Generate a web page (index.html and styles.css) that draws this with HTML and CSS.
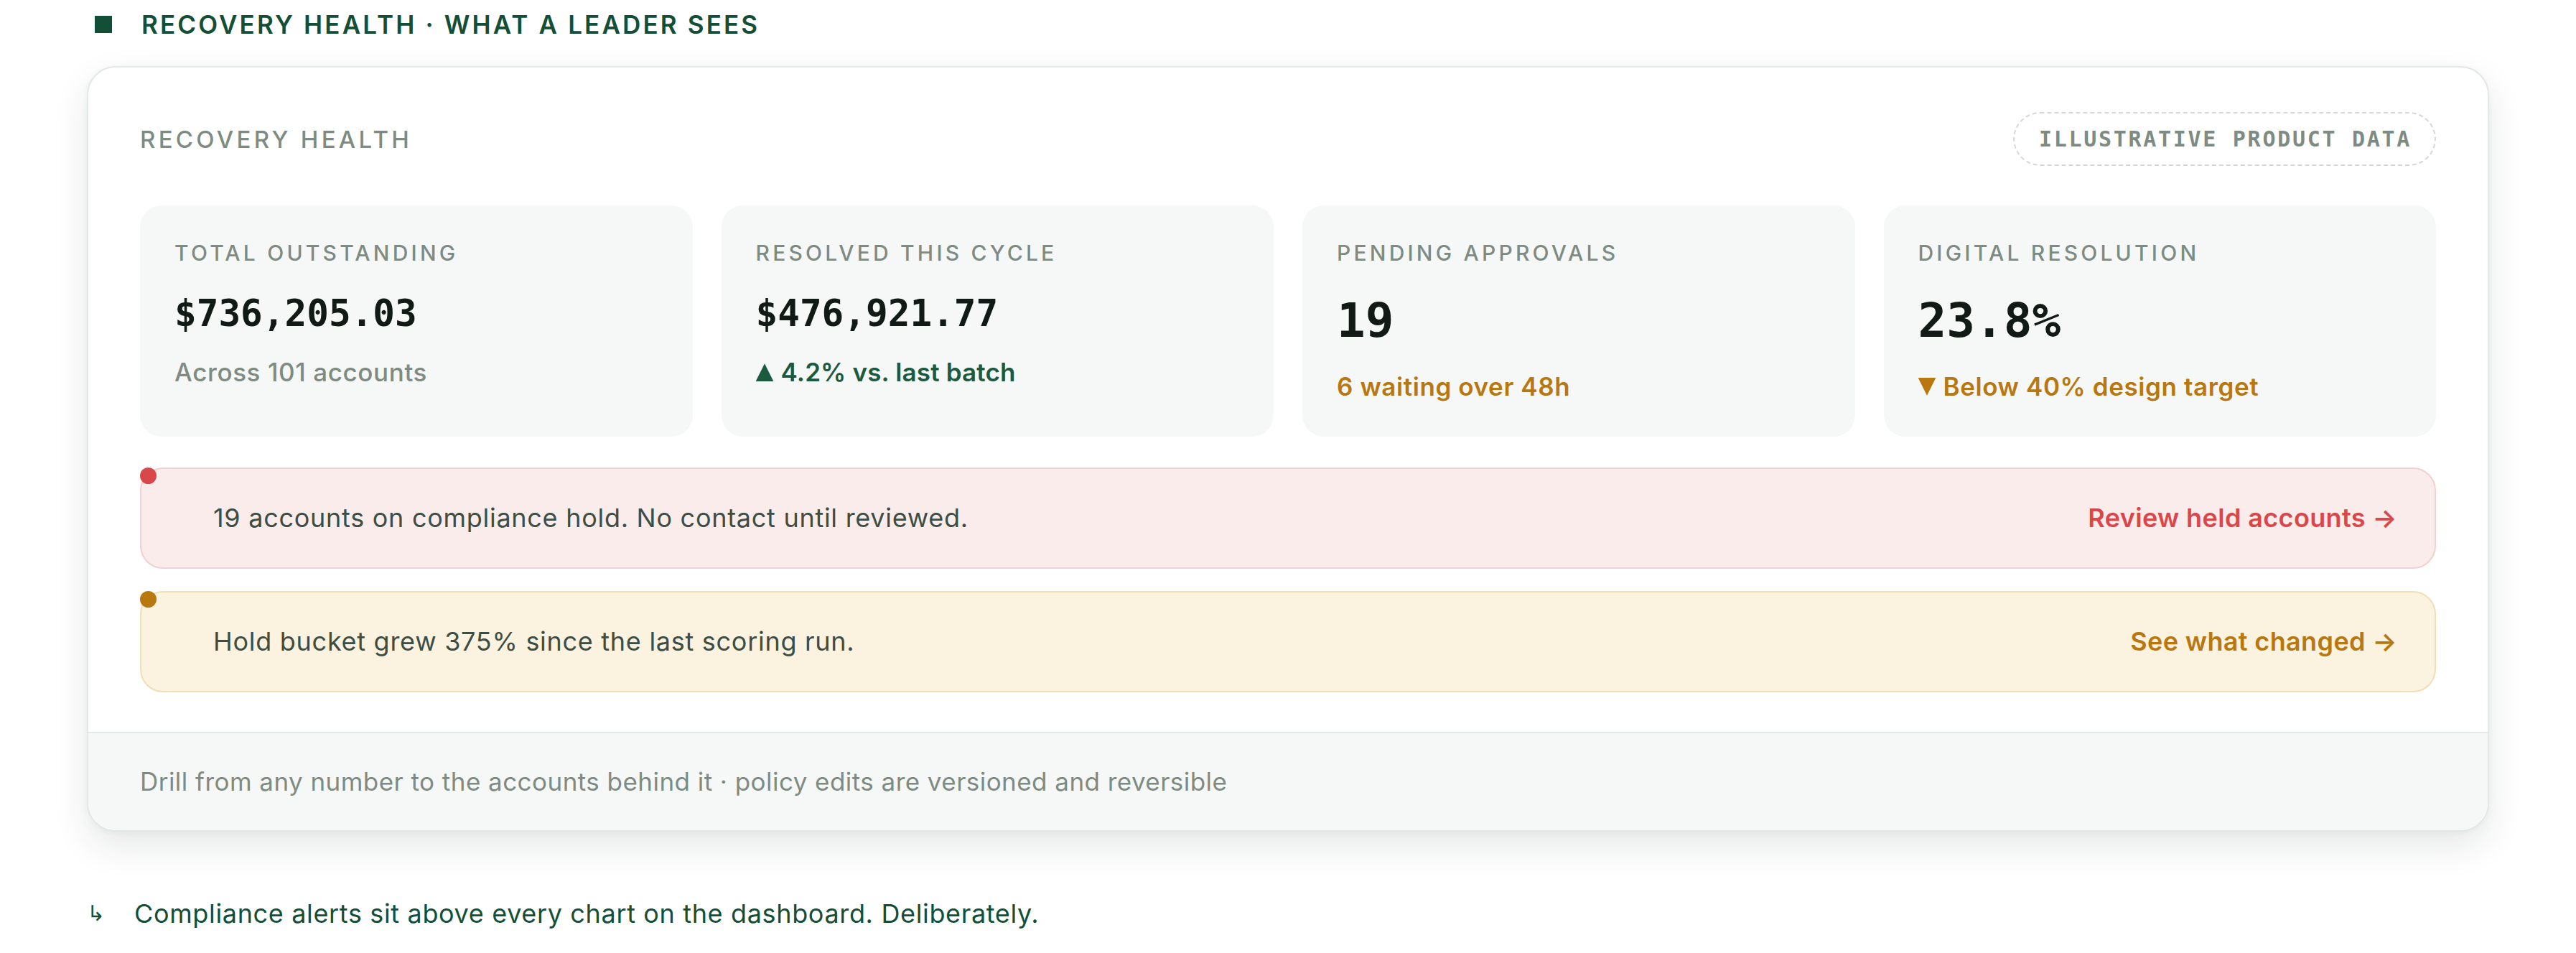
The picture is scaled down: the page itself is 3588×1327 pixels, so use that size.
FILE: index.html
```html
<!DOCTYPE html>
<html lang="en">

<head>
    <meta charset="UTF-8">
    <meta name="viewport" content="width=device-width, initial-scale=1.0">
    <title>Recovery Health</title>
    <link rel="stylesheet" href="styles.css">
</head>

<body>
    <main class="page">
        <h2 class="eyebrow"><span class="eyebrow-mark"></span>Recovery health · What a leader sees</h2>

        <section class="panel">
            <div class="panel-body">
                <div class="panel-head">
                    <span class="panel-title">Recovery health</span>
                    <span class="tag">Illustrative product data</span>
                </div>

                <!-- Headline numbers -->
                <div class="stats">
                    <div class="stat">
                        <div class="stat-label">Total outstanding</div>
                        <div class="stat-value">$736,205.03</div>
                        <div class="stat-sub">Across 101 accounts</div>
                    </div>
                    <div class="stat">
                        <div class="stat-label">Resolved this cycle</div>
                        <div class="stat-value">$476,921.77</div>
                        <div class="stat-sub good"><span class="tri up"></span>4.2% vs. last batch</div>
                    </div>
                    <div class="stat">
                        <div class="stat-label">Pending approvals</div>
                        <div class="stat-value big">19</div>
                        <div class="stat-sub warn">6 waiting over 48h</div>
                    </div>
                    <div class="stat">
                        <div class="stat-label">Digital resolution</div>
                        <div class="stat-value big">23.8%</div>
                        <div class="stat-sub warn"><span class="tri down"></span>Below 40% design target</div>
                    </div>
                </div>

                <!-- Alerts -->
                <div class="alerts">
                    <div class="alert alert-danger">
                        <span class="alert-dot"></span>
                        <p>19 accounts on compliance hold. No contact until reviewed.</p>
                        <a href="#">Review held accounts →</a>
                    </div>
                    <div class="alert alert-warn">
                        <span class="alert-dot"></span>
                        <p>Hold bucket grew 375% since the last scoring run.</p>
                        <a href="#">See what changed →</a>
                    </div>
                </div>
            </div>

            <div class="panel-foot">
                Drill from any number to the accounts behind it · policy edits are versioned and reversible
            </div>
        </section>

        <p class="note"><span class="note-arrow">↳</span>Compliance alerts sit above every chart on the dashboard. Deliberately.</p>
    </main>
</body>

</html>
```

FILE: styles.css
```css
* {
    margin: 0;
    padding: 0;
    box-sizing: border-box;
}

body {
    font-family: 'Inter', 'Liberation Sans', sans-serif;
    background: #fff;
    color: #3d4d44;
}

.page {
    padding: 13px 121px 0;
}

/* Section heading above the panel */
.eyebrow {
    display: flex;
    align-items: center;
    gap: 41px;
    padding-left: 11px;
    font-size: 35px;
    line-height: 42px;
    font-weight: 600;
    letter-spacing: 0.09em;
    text-transform: uppercase;
    color: #134e37;
}

.eyebrow-mark {
    width: 24px;
    height: 24px;
    background: #134e37;
}

.panel {
    margin-top: 37px;
    background: #fff;
    border: 2px solid #e2e8e4;
    border-radius: 40px;
    overflow: hidden;
    box-shadow: 0 20px 50px rgba(20, 40, 30, 0.11), 0 2px 8px rgba(20, 40, 30, 0.04);
}

.panel-body {
    padding: 62px 72px 55px;
}

.panel-head {
    display: flex;
    justify-content: space-between;
    align-items: center;
    margin-bottom: 55px;
}

.panel-title {
    font-size: 33px;
    font-weight: 500;
    letter-spacing: 0.13em;
    text-transform: uppercase;
    color: #7e8b82;
}

.tag {
    display: flex;
    align-items: center;
    height: 75px;
    padding: 0 32px 0 34px;
    border: 2px dashed #d3dad6;
    border-radius: 999px;
    font-family: 'DejaVu Sans Mono', 'Liberation Mono', monospace;
    font-size: 30px;
    font-weight: 700;
    letter-spacing: 0.09em;
    text-transform: uppercase;
    color: #7e8b82;
}

.stats {
    display: grid;
    grid-template-columns: repeat(4, 1fr);
    gap: 40px;
    margin-bottom: 43px;
}

.stat {
    background: #f6f8f7;
    border-radius: 30px;
    padding: 48px;
}

.stat-label {
    font-size: 30px;
    line-height: 36px;
    font-weight: 500;
    letter-spacing: 0.14em;
    text-transform: uppercase;
    color: #7e8b82;
    margin-bottom: 34px;
}

.stat-value {
    font-family: 'DejaVu Sans Mono', 'Liberation Mono', monospace;
    font-size: 51px;
    line-height: 1.3;
    font-weight: 700;
    color: #111a15;
}

.stat-value.big {
    font-size: 66px;
}

.stat-sub {
    margin-top: 26px;
    font-size: 35px;
    line-height: 44px;
    font-weight: 500;
    letter-spacing: 0.017em;
    color: #7e8b82;
}

.stat-sub.good {
    color: #1b5a3e;
    font-weight: 600;
    letter-spacing: 0.005em;
}

.stat-sub.warn {
    color: #b8770f;
    font-weight: 600;
}

.tri {
    display: inline-block;
    width: 25px;
    height: 25px;
    margin-right: 10px;
    background: currentColor;
}

.tri.up {
    clip-path: polygon(50% 0, 100% 100%, 0 100%);
}

.tri.down {
    clip-path: polygon(0 0, 100% 0, 50% 100%);
}

.alerts {
    display: flex;
    flex-direction: column;
    gap: 31px;
}

.alert {
    position: relative;
    display: flex;
    justify-content: space-between;
    align-items: center;
    padding: 45px 52px 45px 100px;
    border: 2px solid;
    border-radius: 32px;
    font-size: 36px;
    line-height: 47px;
    letter-spacing: 0.02em;
}

.alert p {
    color: #3d4d44;
}

.alert a {
    font-weight: 600;
    letter-spacing: 0.01em;
    text-decoration: none;
}

.alert-dot {
    position: absolute;
    top: -2px;
    left: -2px;
    width: 23px;
    height: 23px;
    border-radius: 50%;
}

.alert-danger {
    background: #fbecec;
    border-color: #f1d0d1;
}

.alert-danger a {
    color: #d9474a;
}

.alert-danger .alert-dot {
    background: #d9474a;
}

.alert-warn {
    background: #fbf2e0;
    border-color: #efdfb3;
}

.alert-warn a {
    color: #b8770f;
}

.alert-warn .alert-dot {
    background: #b8770f;
}

.panel-foot {
    padding: 47px 72px;
    border-top: 2px solid #e4e9e6;
    background: #f6f8f7;
    font-size: 35px;
    line-height: 41px;
    letter-spacing: 0.013em;
    color: #7e8b82;
}

.note {
    display: flex;
    align-items: center;
    margin-top: 93px;
    font-size: 36px;
    line-height: 42px;
    letter-spacing: 0.018em;
    color: #134e37;
}

.note-arrow {
    width: 66px;
    font-family: 'DejaVu Sans', sans-serif;
    font-size: 30px;
    letter-spacing: 0;
}
```
